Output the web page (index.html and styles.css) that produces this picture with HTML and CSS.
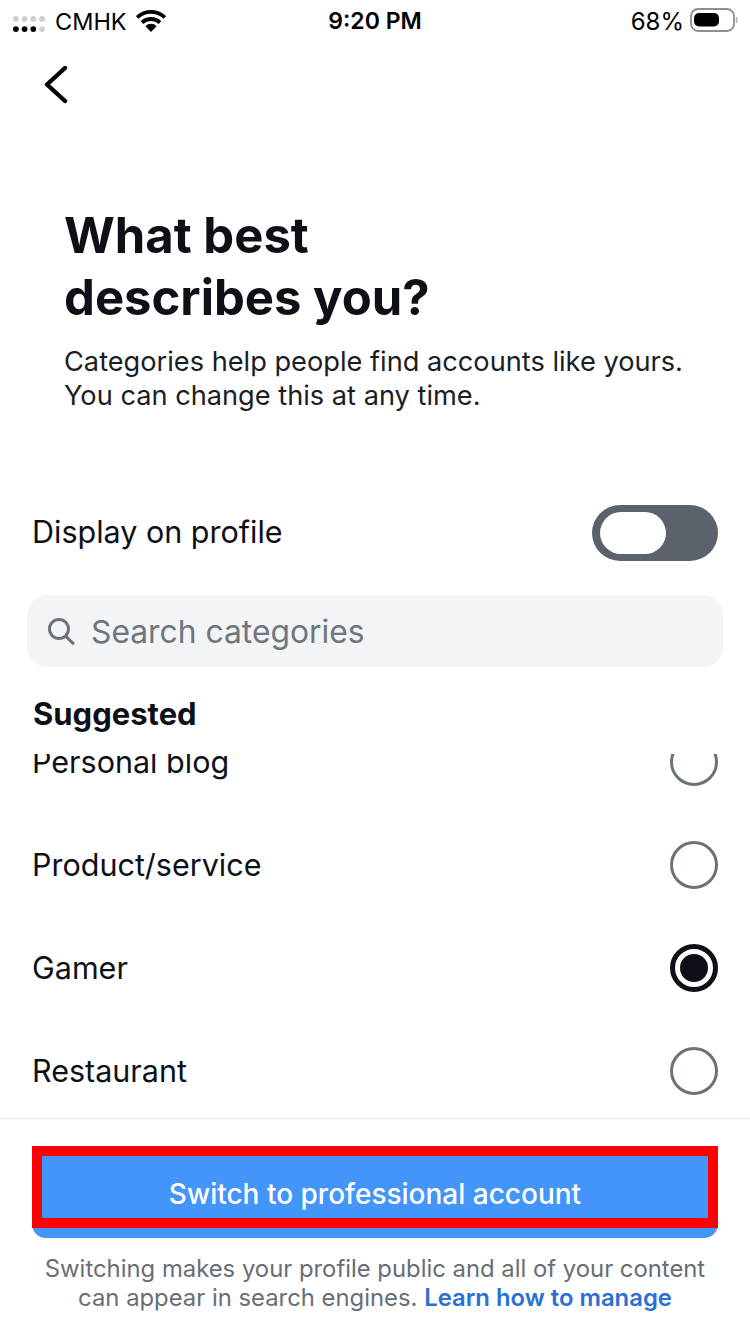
FILE: index.html
```html
<!DOCTYPE html>
<html lang="en">
<head>
<meta charset="utf-8">
<title>What best describes you?</title>
<link rel="stylesheet" href="styles.css">
</head>
<body>
<main class="screen">
  <div class="status">
    <div class="status-side">
      <svg class="signal" width="33" height="16" viewBox="0 0 33 16">
        <g fill="#cfcfcf"><circle cx="2.9" cy="2.9" r="2.9"/><circle cx="11.6" cy="2.9" r="2.9"/><circle cx="20.3" cy="2.9" r="2.9"/><circle cx="29" cy="2.9" r="2.9"/><circle cx="29" cy="13.1" r="2.9"/></g>
        <g fill="#000"><circle cx="2.9" cy="13.1" r="2.9"/><circle cx="11.6" cy="13.1" r="2.9"/><circle cx="20.3" cy="13.1" r="2.9"/></g>
      </svg>
      <span class="carrier">CMHK</span>
      <svg class="wifi" width="30" height="22" viewBox="0 0 30 22">
        <path d="M1.2 7.4a20 20 0 0 1 27.6 0M6 12.6a13 13 0 0 1 18 0" fill="none" stroke="#000" stroke-width="3.8"/>
        <path d="M15 22 9.4 16.2a7.8 7.8 0 0 1 11.2 0z" fill="#000"/>
      </svg>
    </div>
    <span class="clock">9:20 PM</span>
    <div class="status-side status-right">
      <span class="percent">68%</span>
      <svg class="battery" width="48" height="24" viewBox="0 0 48 24">
        <rect x="1" y="1" width="43" height="22" rx="7" fill="none" stroke="#8e8e8e" stroke-width="1.8"/>
        <rect x="4" y="5" width="25" height="13.5" rx="5" fill="#000"/>
        <path d="M46.6 9v6" stroke="#b5b5b5" stroke-width="1.6" fill="none"/>
      </svg>
    </div>
  </div>

  <nav class="nav">
    <svg class="back" width="26" height="42" viewBox="0 0 26 42">
      <path d="M22 6 4 22.5 22 39" fill="none" stroke="#000" stroke-width="4.4" stroke-linecap="round" stroke-linejoin="round"/>
    </svg>
  </nav>

  <header class="intro">
    <h1 class="title">What best<br>describes you?</h1>
    <p class="lead">Categories help people find accounts like yours.<br>You can change this at any time.</p>
  </header>

  <div class="display-row">
    <span class="row-label row-label-up">Display on profile</span>
    <span class="toggle"><span class="knob"></span></span>
  </div>

  <div class="search">
    <svg class="search-icon" width="30" height="30" viewBox="0 0 30 30">
      <circle cx="13" cy="13" r="9.5" fill="none" stroke="#6b727a" stroke-width="3"/>
      <path d="m20 20.5 7 6.8" stroke="#6b727a" stroke-width="3" stroke-linecap="round" fill="none"/>
    </svg>
    <span class="search-text">Search categories</span>
  </div>

  <h2 class="section">Suggested</h2>

  <div class="list">
    <div class="list-scroll">
      <div class="item"><span class="row-label">Personal blog</span><span class="radio"></span></div>
      <div class="item"><span class="row-label">Product/service</span><span class="radio"></span></div>
      <div class="item"><span class="row-label">Gamer</span><span class="radio radio-on"></span></div>
      <div class="item"><span class="row-label">Restaurant</span><span class="radio"></span></div>
    </div>
  </div>

  <footer class="footer">
    <div class="button">
      <span class="button-label">Switch to professional account</span>
      <span class="highlight"></span>
    </div>
    <p class="note">Switching makes your profile public and all of your content<br>can appear in search engines. <a class="link">Learn how to manage</a></p>
  </footer>
</main>
</body>
</html>
```

FILE: styles.css
```css
* { box-sizing: border-box; }
html, body { margin: 0; padding: 0; background: #fff; }
body { font-family: Inter, "Liberation Sans", sans-serif; color: #0d1117; }
.screen { width: 750px; height: 1334px; display: flex; flex-direction: column; overflow: hidden; }

.status { height: 42px; padding: 0 12px 0 13px; display: grid; grid-template-columns: 1fr auto 1fr; align-items: center; color: #000; }
.status-side { display: flex; align-items: center; }
.status-right { justify-content: flex-end; }
.signal { margin-top: 6px; }
.carrier { margin-left: 9px; font-size: 23.5px; }
.wifi { margin-left: 9px; margin-top: -1px; }
.clock { font-size: 23px; font-weight: 600; margin-left: -1px; }
.percent { font-size: 24px; margin-right: 6px; }
.signal, .wifi, .battery { display: block; flex: none; }
.battery { margin-top: -2px; }

.nav { height: 84px; padding: 20px 0 0 43px; }
.back { display: block; }

.intro { height: 368px; padding: 79px 30px 0 64px; }
.title { margin: 0; font-size: 49px; line-height: 62px; font-weight: 700; }
.lead { margin: 16px 0 0; font-size: 27.2px; line-height: 34px; color: #1a1e24; }

.display-row { display: flex; justify-content: space-between; align-items: center; height: 56px; margin-top: 11px; padding: 0 32px; }
.row-label { font-size: 30.5px; line-height: 40px; color: #0d1117; }
.row-label-up { margin-bottom: 2px; }
.toggle { width: 126px; height: 56px; border-radius: 28px; background: #5c626b; padding: 7px 0 0 8px; }
.knob { display: block; width: 66px; height: 42px; border-radius: 21px; background: #fff; }

.search { display: flex; align-items: center; gap: 15px; height: 72px; margin: 34px 27px 0; padding: 0 0 0 19px; background: #f3f4f6; border-radius: 20px; }
.search-icon { display: block; flex: none; }
.search-text { font-size: 31.8px; color: #6f767e; }

.section { margin: 28px 33px 0; font-size: 31px; line-height: 38px; font-weight: 700; }

.list { height: 364px; overflow: hidden; margin-top: 21px; }
.list-scroll { margin-top: -44px; padding: 0 32px; }
.item { display: flex; align-items: center; justify-content: space-between; height: 103px; }
.radio { width: 48px; height: 48px; border-radius: 50%; border: 3px solid #6b727b; flex: none; }
.radio-on { border: 5px solid #0d1117; padding: 5px; background: #0d1117; background-clip: content-box; }

.footer { flex: 1; border-top: 1px solid #e5e6e8; padding: 27px 32px 0; }
.button { position: relative; height: 92px; background: #4495f9; border-radius: 0 0 14px 14px; text-align: center; padding-top: 28px; }
.button-label { font-size: 28px; line-height: 40px; font-weight: 500; color: #fff; }
.highlight { position: absolute; left: 0; right: 0; top: 0; height: 82px; border: 10px solid #ff0000; }
.note { margin: 16px -10px 0; text-align: center; font-size: 23.85px; line-height: 29px; color: #686e76; }
.link { color: #2a6fd4; font-weight: 600; }
```
